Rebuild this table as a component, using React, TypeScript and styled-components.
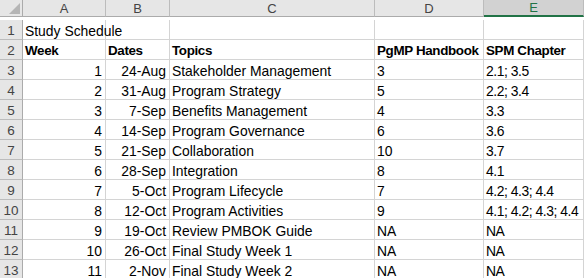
import React from 'react';
import styled, { createGlobalStyle } from 'styled-components';

const GlobalStyle = createGlobalStyle`
  html, body {
    margin: 0;
    padding: 0;
    background: #ffffff;
  }
  body {
    font-family: "Liberation Sans", Arial, sans-serif;
  }
`;

const COLS = '23px 83px 64px 205px 109px 1fr';

const Sheet = styled.div`
  display: grid;
  grid-template-columns: ${COLS};
  grid-auto-rows: 20px;
  width: 584px;
  height: 278px;
  overflow: hidden;
  font-size: 13.9px;
  color: #000;
`;

const Corner = styled.div`
  position: relative;
  height: 17px;
  background: #e6e6e6;
  border-right: 1px solid #ababab;
  border-bottom: 1px solid #ababab;
  box-sizing: border-box;

  &::after {
    content: '';
    position: absolute;
    right: 2px;
    bottom: 2px;
    width: 0;
    height: 0;
    border-left: 11px solid transparent;
    border-bottom: 11px solid #b5b5b5;
  }
`;

const ColHead = styled.div<{ $selected?: boolean }>`
  height: 17px;
  display: flex;
  align-items: center;
  justify-content: center;
  box-sizing: border-box;
  background: ${(p) => (p.$selected ? '#d2d2d2' : '#e6e6e6')};
  color: ${(p) => (p.$selected ? '#217346' : '#444')};
  border-right: 1px solid #bcbcbc;
  border-bottom: ${(p) => (p.$selected ? '2px solid #217346' : '1px solid #ababab')};
  font-size: 13px;
`;

const RowHead = styled.div`
  display: flex;
  align-items: center;
  justify-content: center;
  padding-top: 1px;
  box-sizing: border-box;
  background: #e6e6e6;
  color: #444;
  border-right: 1px solid #ababab;
  border-bottom: 1px solid #bcbcbc;
  font-size: 13.5px;
`;

const Cell = styled.div<{ $right?: boolean; $bold?: boolean; $tight?: boolean }>`
  display: flex;
  align-items: center;
  justify-content: ${(p) => (p.$right ? 'flex-end' : 'flex-start')};
  padding: 2px 3px 0 2px;
  box-sizing: border-box;
  border-right: 1px solid #d4d4d4;
  border-bottom: 1px solid #d4d4d4;
  white-space: nowrap;
  font-weight: ${(p) => (p.$bold ? 700 : 400)};
  font-size: ${(p) => (p.$bold ? '13.4px' : 'inherit')};
  letter-spacing: ${(p) => (p.$bold ? '-0.35px' : p.$tight ? '-0.45px' : 'normal')};
`;

const rows: [number, string, string, string, string][] = [
  [1, '24-Aug', 'Stakeholder Management', '3', '2.1; 3.5'],
  [2, '31-Aug', 'Program Strategy', '5', '2.2; 3.4'],
  [3, '7-Sep', 'Benefits Management', '4', '3.3'],
  [4, '14-Sep', 'Program Governance', '6', '3.6'],
  [5, '21-Sep', 'Collaboration', '10', '3.7'],
  [6, '28-Sep', 'Integration', '8', '4.1'],
  [7, '5-Oct', 'Program Lifecycle', '7', '4.2; 4.3; 4.4'],
  [8, '12-Oct', 'Program Activities', '9', '4.1; 4.2; 4.3; 4.4'],
  [9, '19-Oct', 'Review PMBOK Guide', 'NA', 'NA'],
  [10, '26-Oct', 'Final Study Week 1', 'NA', 'NA'],
  [11, '2-Nov', 'Final Study Week 2', 'NA', 'NA'],
];

const App: React.FC = () => {
  return (
    <>
      <GlobalStyle />
      <Sheet>
        <Corner />
        <ColHead>A</ColHead>
        <ColHead>B</ColHead>
        <ColHead>C</ColHead>
        <ColHead>D</ColHead>
        <ColHead $selected>E</ColHead>

        <RowHead>1</RowHead>
        <Cell>Study Schedule</Cell>
        <Cell />
        <Cell />
        <Cell />
        <Cell />

        <RowHead>2</RowHead>
        <Cell $bold>Week</Cell>
        <Cell $bold>Dates</Cell>
        <Cell $bold>Topics</Cell>
        <Cell $bold>PgMP Handbook</Cell>
        <Cell $bold>SPM Chapter</Cell>

        {rows.map((r, i) => (
          <React.Fragment key={i}>
            <RowHead>{i + 3}</RowHead>
            <Cell $right>{r[0]}</Cell>
            <Cell $right>{r[1]}</Cell>
            <Cell>{r[2]}</Cell>
            <Cell>{r[3]}</Cell>
            <Cell $tight>{r[4]}</Cell>
          </React.Fragment>
        ))}
      </Sheet>
    </>
  );
};

export default App;
